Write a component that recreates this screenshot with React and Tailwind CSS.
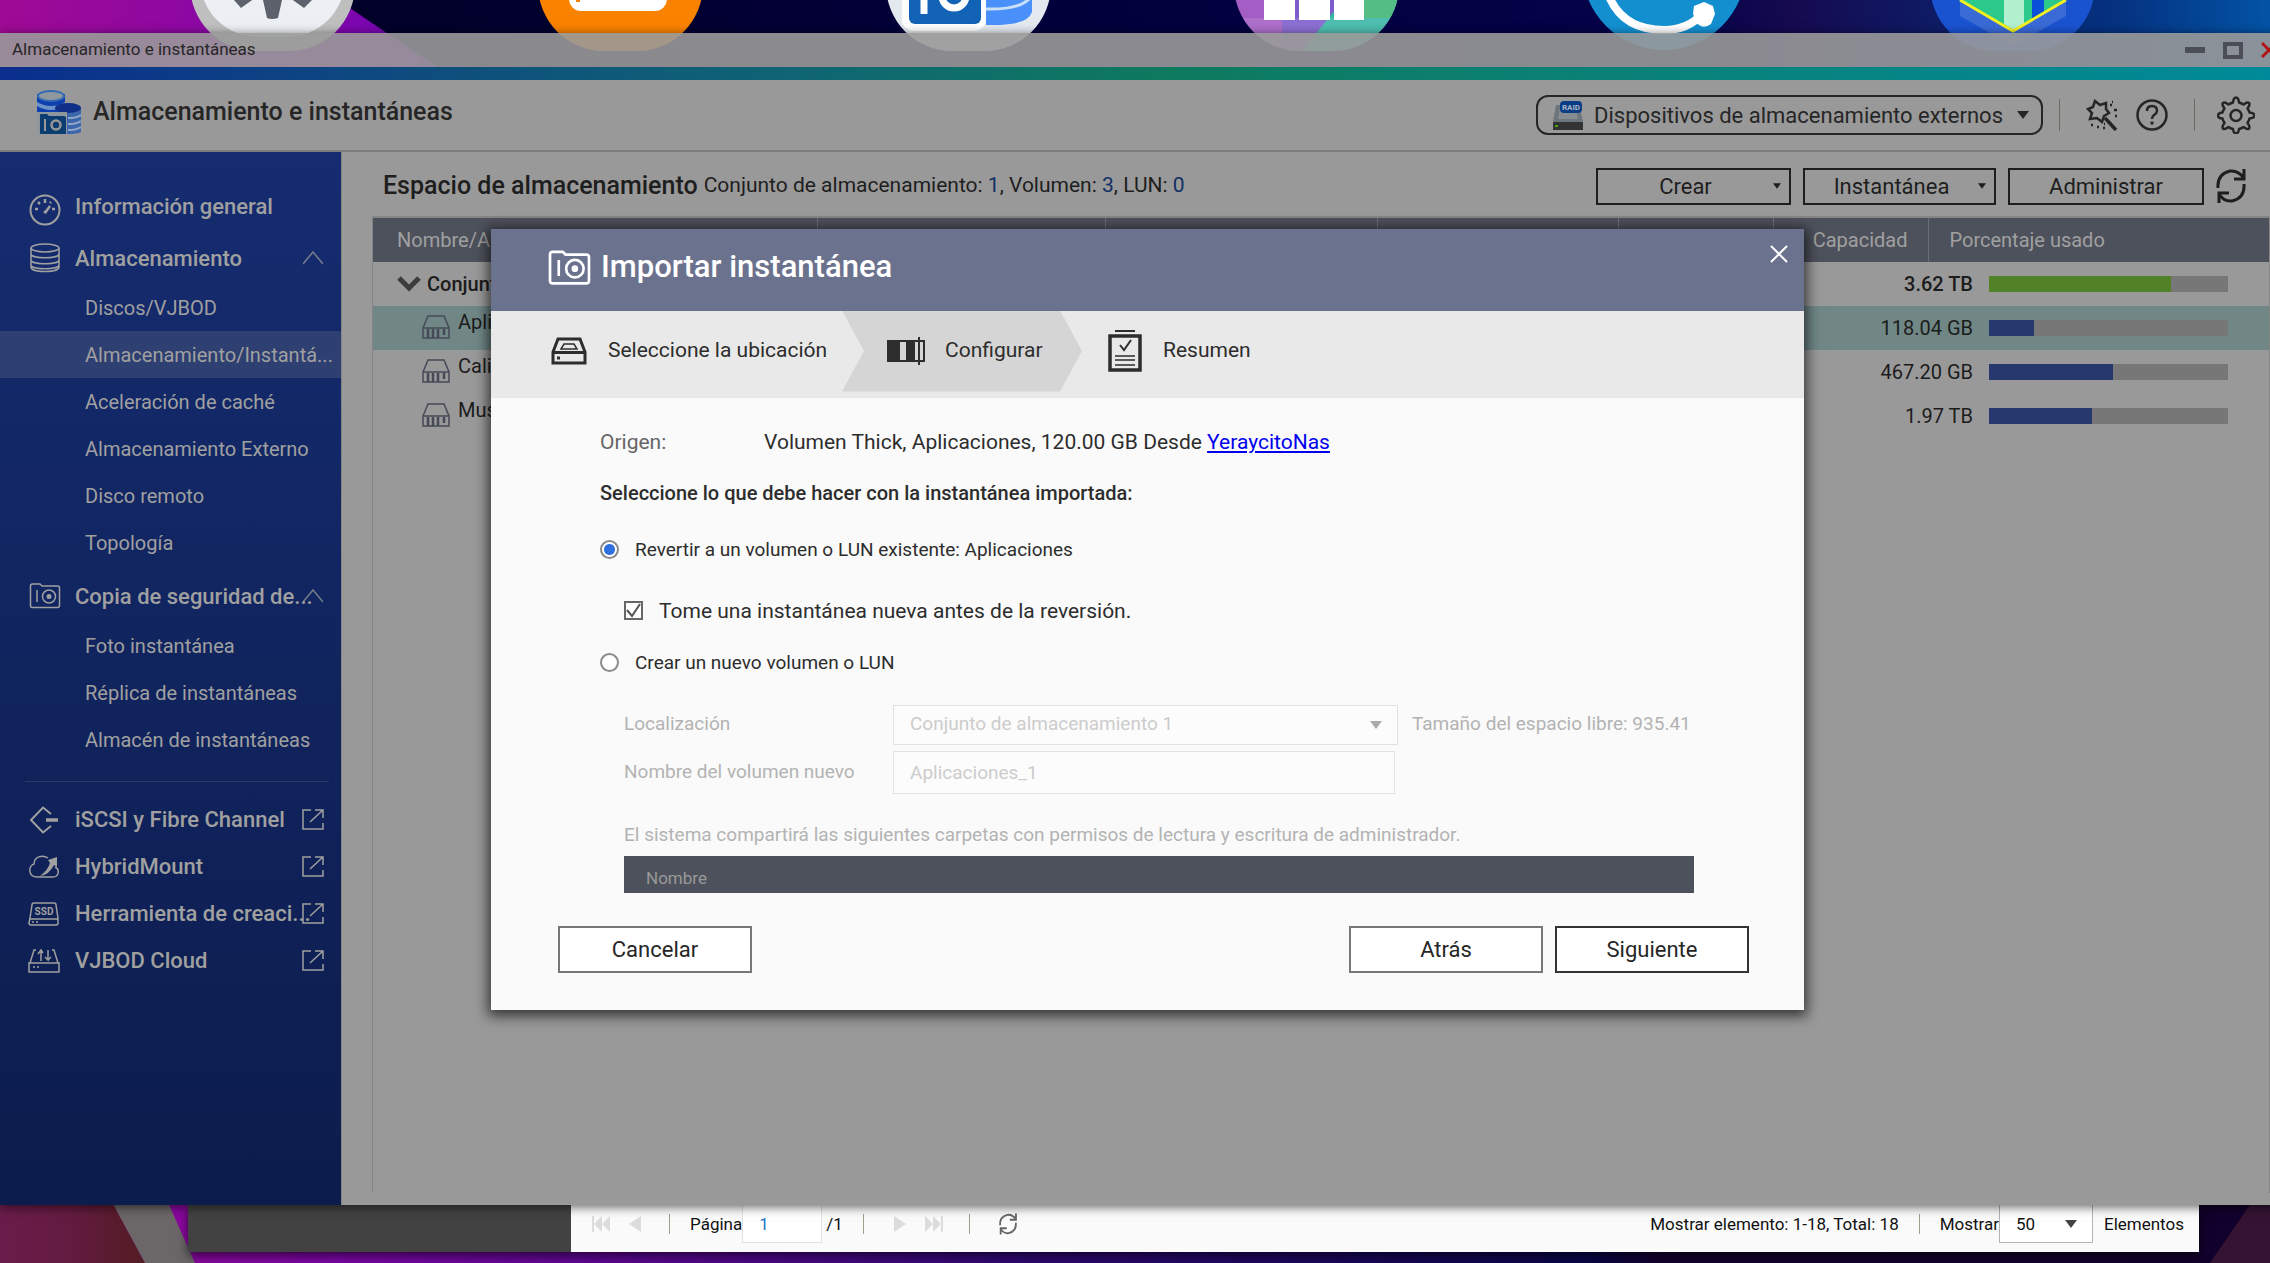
import { useState } from "react";

const desktopIcons = [
  { id: "settings", art: SettingsArt },
  { id: "files", art: FilesArt },
  { id: "storage", art: StorageArt },
  { id: "apps", art: AppsArt },
  { id: "cloud", art: CloudArt },
  { id: "shield", art: ShieldArt },
];

const storageItems = [
  "Discos/VJBOD",
  "Almacenamiento/Instantá...",
  "Aceleración de caché",
  "Almacenamiento Externo",
  "Disco remoto",
  "Topología",
];

const snapshotItems = ["Foto instantánea", "Réplica de instantáneas", "Almacén de instantáneas"];

const externalItems = [
  { label: "iSCSI y Fibre Channel", icon: IscsiIcon },
  { label: "HybridMount", icon: HybridIcon },
  { label: "Herramienta de creaci...", icon: SsdIcon },
  { label: "VJBOD Cloud", icon: VjbodIcon },
];

const volumes = [
  { name: "Aplicaciones", size: "118.04 GB", used: 19, selected: true },
  { name: "Calibre", size: "467.20 GB", used: 52 },
  { name: "Musica", size: "1.97 TB", used: 43 },
];

function SettingsArt() {
  return (
    <svg viewBox="0 0 165 165" className="h-full w-full">
      <rect width="165" height="165" rx="66" fill="#bfbfbf" />
      <rect x="10" y="10" width="145" height="141" rx="58" fill="#eceff4" />
      <path d="M44 114l7 8 14-10 8 2 4 18q5 2 11 0l4-18 8-2 14 10 8-8-6-14H50z" fill="#5c616b" />
    </svg>
  );
}

function FilesArt() {
  return (
    <svg viewBox="0 0 165 165" className="h-full w-full">
      <rect width="165" height="165" rx="66" fill="#f98200" />
      <rect x="31" y="40" width="98" height="85" rx="12" fill="#fff" />
      <path d="M40 112v4" stroke="#f98200" strokeWidth="4" />
    </svg>
  );
}

function StorageArt() {
  return (
    <svg viewBox="0 0 165 165" className="h-full w-full">
      <rect width="165" height="165" rx="66" fill="#e3e9ef" />
      <path d="M100 60h46v66q-4 12-32 13h-14z" fill="#4a90fa" />
      <path d="M100 123q38 1 46-14" fill="none" stroke="#c9dff8" strokeWidth="3" />
      <rect x="16" y="60" width="84" height="85" rx="12" fill="#fff" />
      <rect x="23" y="60" width="72" height="78" rx="6" fill="#1262b5" />
      <path d="M38 90v38" stroke="#fff" strokeWidth="7" />
      <circle cx="68" cy="110" r="12" fill="none" stroke="#fff" strokeWidth="7" />
    </svg>
  );
}

function AppsArt() {
  return (
    <svg viewBox="0 0 165 165" className="h-full w-full">
      <defs>
        <clipPath id="appsClip">
          <rect width="165" height="165" rx="66" />
        </clipPath>
      </defs>
      <g clipPath="url(#appsClip)">
        <path d="M0 0h165v165H0z" fill="#a35dc4" />
        <path d="M48 100h60v65H48z" fill="#7d5ccc" />
        <path d="M100 125l30-12h35v52H68z" fill="#35b5a4" />
        <path d="M126 80h39v52h-39z" fill="#54bd84" />
        <path d="M0 132h165v33H0z" fill="#fff" opacity=".12" />
        <path d="M30 90h31v44H30zM65 90h31v44H65zM100 90h30v44h-30z" fill="#fff" />
      </g>
    </svg>
  );
}

function CloudArt() {
  return (
    <svg viewBox="0 0 165 165" className="h-full w-full">
      <circle cx="82" cy="82" r="82" fill="#138fd0" />
      <path d="M26 108q14 36 56 36 24 0 38-16" fill="none" stroke="#fff" strokeWidth="8" />
      <path d="M112 120l10-4 9 4 2 8-4 10q-8 6-14-1l-4-9z" fill="#fff" />
    </svg>
  );
}

function ShieldArt() {
  return (
    <svg viewBox="0 0 165 165" className="h-full w-full">
      <rect width="165" height="165" rx="66" fill="#1a53cf" />
      <path d="M30 90h106v40l-53 30-53-30z" fill="#3a6ad6" />
      <path d="M30 114V60h106v54l-53 31z" fill="#2cc98a" />
      <path d="M74 60h20v78l-10 6-10-6z" fill="#b2f0cf" />
      <path d="M102 60h12v66l-12 7z" fill="#0a50d8" />
      <path d="M30 114l53 31 53-31" fill="none" stroke="#f4f01f" strokeWidth="3" />
    </svg>
  );
}

function Wallpaper() {
  return (
    <svg
      className="absolute inset-0 h-full w-full"
      viewBox="0 0 2270 1263"
      preserveAspectRatio="none"
      aria-hidden="true"
    >
      <defs>
        <linearGradient id="wallTop" x1="0" x2="1">
          <stop offset="0" stopColor="#010020" />
          <stop offset=".45" stopColor="#02003a" />
          <stop offset=".74" stopColor="#05024a" />
          <stop offset=".79" stopColor="#150a50" />
          <stop offset=".93" stopColor="#05317f" />
          <stop offset="1" stopColor="#0353a5" />
        </linearGradient>
        <linearGradient id="wallMagenta" x1="0" x2="1">
          <stop offset="0" stopColor="#9f0a95" />
          <stop offset="1" stopColor="#7405b4" />
        </linearGradient>
        <linearGradient id="wallBottom" x1="0" x2="1">
          <stop offset="0" stopColor="#9c0a96" />
          <stop offset=".15" stopColor="#7c06a8" />
          <stop offset=".45" stopColor="#300873" />
          <stop offset=".7" stopColor="#090648" />
          <stop offset=".73" stopColor="#140230" />
          <stop offset="1" stopColor="#12002c" />
        </linearGradient>
        <linearGradient id="wallMaroon" x1="0" x2="1">
          <stop offset="0" stopColor="#6a1c4a" />
          <stop offset=".5" stopColor="#631b40" />
          <stop offset="1" stopColor="#521c22" />
        </linearGradient>
      </defs>
      <rect width="2270" height="640" fill="url(#wallTop)" />
      <path d="M0 0h338l105 71H0z" fill="url(#wallMagenta)" />
      <rect y="640" width="2270" height="623" fill="url(#wallBottom)" />
      <path d="M0 1180h100l45 83H0z" fill="url(#wallMaroon)" />
      <path d="M100 1180h58l37 83h-50z" fill="#6b6668" />
      <path d="M2267 1180h3v83h-60z" fill="#341432" />
    </svg>
  );
}

function GaugeIcon() {
  return (
    <svg viewBox="0 0 32 32" className="h-8 w-8" fill="none" stroke="currentColor" strokeWidth="2">
      <circle cx="16" cy="16" r="14.5" />
      <path d="M16 19l5-7" strokeWidth="2.5" />
      <circle cx="16" cy="18" r="1.5" fill="currentColor" stroke="none" />
      <path d="M6 15h3M23 15h3M9 8l2 2M16 5v4M22 8l-1 1" strokeWidth="2.5" />
    </svg>
  );
}

function DiskStackIcon() {
  return (
    <svg viewBox="0 0 32 32" className="h-8 w-8" fill="none" stroke="currentColor" strokeWidth="1.5">
      <ellipse cx="16" cy="6" rx="14" ry="4" />
      <path d="M2 6v19c0 6 28 6 28 0V6M2 12c0 5 28 5 28 0M2 18c0 5 28 5 28 0M2 23c0 5 28 5 28 0" />
    </svg>
  );
}

function SnapshotIcon({ className, width = 1.5 }) {
  return (
    <svg viewBox="0 0 32 26" className={className} fill="none" stroke="currentColor" strokeWidth={width}>
      <path d="M1.5 3q0-2 2-2H11l2 2h15.500q2 0 2 2v17.500q0 2-2 2h-25q-2 0-2-2z" />
      <path d="M8 7v12" />
      <circle cx="20" cy="13.500" r="6.500" />
      <circle cx="20" cy="13.500" r="2.500" fill="currentColor" stroke="none" />
    </svg>
  );
}

function IscsiIcon() {
  return (
    <svg viewBox="0 0 32 28" className="h-7 w-8 shrink-0" fill="none" stroke="currentColor" strokeWidth="2">
      <path d="M23 8l-8-6.500L3 14l12 12.500 8-6.500" />
      <path d="M18 14h12" strokeWidth="3.500" />
    </svg>
  );
}

function HybridIcon() {
  return (
    <svg viewBox="0 0 32 24" className="h-6 w-8 shrink-0" fill="none" stroke="currentColor" strokeWidth="1.500">
      <path d="M20 3C14-1 6 2 6 9c-6 2-6 13 3 13h16c6 0 7-8 2-10" />
      <path d="M20 5l9-3v10l-3-2q-5 10-14 11 8-6 10-13z" fill="currentColor" stroke="none" />
    </svg>
  );
}

function SsdIcon() {
  return (
    <svg viewBox="0 0 32 24" className="h-6 w-8 shrink-0" fill="none" stroke="currentColor" strokeWidth="1.500">
      <path d="M2 16L4 3q0-2 2-2h20q2 0 2 2l2 13v5q0 2-2 2H3q-2 0-2-2zM2 17h28M4 20h2M8 20h2" />
      <text x="16" y="13" textAnchor="middle" fontSize="10" fontWeight="700" fill="currentColor" stroke="none">
        SSD
      </text>
    </svg>
  );
}

function VjbodIcon() {
  return (
    <svg viewBox="0 0 32 24" className="h-6 w-8 shrink-0" fill="none" stroke="currentColor" strokeWidth="1.500">
      <path d="M8 1H6L2 14M24 1h2l4 13M1 14h30v9H1zM5 18h2M9 18h2M13 12V1l-3 4M13 1l2 3M20 1v10l-3-3M20 11l3-3" />
    </svg>
  );
}

function ExternalIcon() {
  return (
    <svg viewBox="0 0 24 24" className="h-6 w-6 shrink-0" fill="none" stroke="currentColor" strokeWidth="1.500">
      <path d="M10 2H2v19h20v-6M14 2h8v8M9 14L22 2" />
    </svg>
  );
}

function ChevronUp() {
  return (
    <svg viewBox="0 0 20 14" className="h-3.5 w-5 shrink-0 opacity-70" fill="none" stroke="currentColor" strokeWidth="1.500">
      <path d="M0 13L10 1l10 12" />
    </svg>
  );
}

function AppLogo() {
  return (
    <svg viewBox="0 0 44 44" className="h-11 w-11">
      <path d="M0 4h28v24H0z" fill="#0f3fae" />
      <ellipse cx="14" cy="6" rx="14" ry="6" fill="#2f69b4" />
      <ellipse cx="14" cy="6" rx="12" ry="4" fill="#8f979f" />
      <path d="M0 12q14 8 28 0v4q-14 8-28 0z" fill="#6d93c8" />
      <path d="M28 18h16v24q-4 2-12 2h-4z" fill="#3c66ac" />
      <ellipse cx="31" cy="18" rx="13" ry="5" fill="#102f87" />
      <path d="M31 28q8 0 13-3M31 34q8 0 13-3M31 40q8 0 13-3" stroke="#8fa6c6" strokeWidth="2" fill="none" />
      <path d="M0 22h30v22H0z" fill="#8e969e" />
      <path d="M3 25q0-1 1-1h6l2 2h15q2 0 2 2v16H3z" fill="#0c3d70" />
      <path d="M8 29v12" stroke="#999" strokeWidth="2" />
      <circle cx="19" cy="35" r="4.500" fill="none" stroke="#999" strokeWidth="2.500" />
    </svg>
  );
}

function RaidIcon() {
  return (
    <svg viewBox="0 0 32 29" className="h-[29px] w-8">
      <path d="M4 4h23l4 17H1z" fill="#6c757b" />
      <path d="M8 7h16l2 11H6z" fill="#858d92" />
      <rect x="1" y="21" width="30" height="8" fill="#333" />
      <rect x="3" y="24" width="3" height="2" fill="#4aa010" />
      <rect x="8" y="0" width="22" height="12" rx="4" fill="#0b3d86" />
      <text x="19" y="9" textAnchor="middle" fontSize="8" fontWeight="700" fill="#aab6c6">
        RAID
      </text>
    </svg>
  );
}

function WandIcon() {
  return (
    <svg viewBox="0 0 32 32" className="h-8 w-8" fill="none" stroke="currentColor" strokeWidth="2.500">
      <path d="M9 2l5 4 6-2 0 6 3 4-5 3-2 6-5-4-7 1 2-6-4-4 5-2z" />
      <path d="M19 19l11 12" strokeWidth="3.500" />
      <path d="M24 6h2M28 11h3M26 3h1M29 17h2M5 26h2M11 28h2M17 29h2M18 25h1" />
    </svg>
  );
}

function HelpIcon() {
  return (
    <svg viewBox="0 0 32 32" className="h-8 w-8" fill="none" stroke="currentColor" strokeWidth="2.500">
      <circle cx="16" cy="16" r="14.500" />
      <path d="M11 12q0-5 5-5t5 5q0 2-3 4-2 1.500-2 4" />
      <path d="M16 22.500v3" strokeWidth="3" />
    </svg>
  );
}

function GearIcon() {
  return (
    <svg viewBox="0 0 38 38" className="h-[38px] w-[38px]" fill="none" stroke="currentColor" strokeWidth="2.500" strokeLinejoin="round">
      <path d="M19 1.500q2.500 0 3 5 3 1 4.500 2 4-3 5.500-1.500t-1.500 5.500q1.500 2 2 4 5 .5 5 3t-5 3q-.5 2-2 4.500 3 4 1.500 5.500t-5.500-1.500q-2 1.500-4.500 2-.5 4.500-3 4.500t-3-4.500q-2.500-.5-4.500-2-4 3-5.500 1.500T7.500 27q-1.500-2.500-2-4.500-4.500-.5-4.500-3t4.500-3q.5-2 2-4Q4.500 8.500 6 7t5.500 1.500q1.500-1 4.500-2 .5-5 3-5z" />
      <circle cx="19" cy="19.500" r="5.500" />
    </svg>
  );
}

function RefreshIcon({ className }) {
  return (
    <svg viewBox="0 0 30 36" className={className} fill="none" stroke="currentColor" strokeWidth="3">
      <path d="M2 20Q1 6 14 3q8-1 14 7M28 1v10h-10" />
      <path d="M28 16q1 14-12 17-8 1-13-7M3 35V25h10" />
    </svg>
  );
}

function VolumeIcon() {
  return (
    <svg viewBox="0 0 28 24" className="h-6 w-7 shrink-0 text-[#454a56]" fill="none" stroke="currentColor" strokeWidth="1.500">
      <path d="M1 13L6 1h16l5 12v10H1zM1 13h26" />
      <path d="M6 14v9M11 14v9M16 14v9M22 14v6" strokeWidth="2.500" />
    </svg>
  );
}

function DriveStepIcon() {
  return (
    <svg viewBox="0 0 36 28" className="h-7 w-9" fill="none" stroke="currentColor" strokeWidth="3">
      <path d="M2 15L7 2h22l5 13v11H2zM2 15.500h32" />
      <path d="M10 12l3-5h10l3 5z" strokeWidth="1.500" />
      <path d="M6 21h3" />
    </svg>
  );
}

function ConfigStepIcon() {
  return (
    <svg viewBox="0 0 38 28" className="h-7 w-[38px]" fill="none" stroke="currentColor">
      <path d="M0 4h13v20H0zM19 4h9v20h-9z" fill="currentColor" stroke="none" />
      <path d="M1 4h36v20H1z" strokeWidth="2" />
      <path d="M32 0v28" strokeWidth="2" />
    </svg>
  );
}

function SummaryStepIcon() {
  return (
    <svg viewBox="0 0 34 42" className="h-[42px] w-[34px]" fill="none" stroke="currentColor">
      <path d="M7 1h20" strokeWidth="2" />
      <path d="M2 6h30v34H2z" strokeWidth="3.500" />
      <path d="M12 15l4 5 7-10" strokeWidth="2" />
      <path d="M7 26h20M7 30h20M7 35h20" strokeWidth="1.500" />
    </svg>
  );
}

function CaretDown({ className = "h-2 w-3" }) {
  return (
    <svg viewBox="0 0 12 8" className={className} fill="currentColor" aria-hidden="true">
      <path d="M0 0h12L6 8z" />
    </svg>
  );
}

function TitleBar() {
  return (
    <div className="flex h-[34px] shrink-0 items-center justify-between bg-[#999999]/90 pr-[18px] pl-3">
      <span className="text-[17px] text-[#262626]">Almacenamiento e instantáneas</span>
      <div className="flex items-center gap-[18px]">
        <button type="button" aria-label="Minimizar" className="flex h-[22px] w-5 items-center">
          <span className="h-1.5 w-5 bg-[#4b4f55]" />
        </button>
        <button type="button" aria-label="Maximizar" className="h-[17px] w-5 border-4 border-[#4b4f55]" />
        <button type="button" aria-label="Cerrar" className="text-[#b01515]">
          <svg viewBox="0 0 16 16" className="h-4 w-4" stroke="currentColor" strokeWidth="3">
            <path d="M1 1l14 14M15 1L1 15" />
          </svg>
        </button>
      </div>
    </div>
  );
}

function Header() {
  return (
    <header className="flex h-[72px] shrink-0 items-center justify-between border-b-2 border-[#7d7d7d] bg-[#999999] pr-10 pl-[37px] text-[#262626]">
      <div className="flex items-center gap-3 pb-1.5">
        <AppLogo />
        <h1 className="text-[25px] font-medium">Almacenamiento e instantáneas</h1>
      </div>
      <div className="flex items-center">
        <button type="button" className="flex h-10 items-center rounded-xl border-2 border-[#262626] pr-3 pl-[14px]">
          <RaidIcon />
          <span className="ml-2.5 text-[22px]">Dispositivos de almacenamiento externos</span>
          <CaretDown className="ml-[14px] h-2 w-3" />
        </button>
        <span className="ml-4 h-8 w-px bg-[#6d6c60]" />
        <div className="ml-[26px] flex items-center gap-[18px]">
          <button type="button" aria-label="Asistente">
            <WandIcon />
          </button>
          <button type="button" aria-label="Ayuda">
            <HelpIcon />
          </button>
        </div>
        <span className="ml-[26px] h-8 w-px bg-[#6d6c60]" />
        <button type="button" aria-label="Configuración" className="ml-[22px]">
          <GearIcon />
        </button>
      </div>
    </header>
  );
}

function NavGroup({ icon, label, items, active }) {
  return (
    <>
      <button type="button" className="flex h-[52px] w-full items-center pr-[18px] pl-[29px] text-left">
        {icon}
        <span className="ml-[14px] min-w-0 flex-1 text-[22px] font-medium whitespace-nowrap">{label}</span>
        <ChevronUp />
      </button>
      <ul>
        {items.map((item) => (
          <li key={item}>
            <a
              href="#"
              className={
                item === active
                  ? "flex h-[47px] items-center bg-[#2e3f72] pl-[85px] text-xl whitespace-nowrap"
                  : "flex h-[47px] items-center pl-[85px] text-xl whitespace-nowrap"
              }
            >
              {item}
            </a>
          </li>
        ))}
      </ul>
    </>
  );
}

function Sidebar() {
  return (
    <nav className="w-[341px] shrink-0 bg-gradient-to-b from-[#152c70] to-[#0c1c4c] pt-7 text-[#a0a0a0]">
      <a href="#" className="flex h-[52px] items-center pl-[29px]">
        <span className="pt-2">
          <GaugeIcon />
        </span>
        <span className="ml-[14px] text-[22px] font-medium">Información general</span>
      </a>
      <NavGroup
        icon={<DiskStackIcon />}
        label="Almacenamiento"
        items={storageItems}
        active="Almacenamiento/Instantá..."
      />
      <div className="pt-1">
        <NavGroup
          icon={<SnapshotIcon className="h-[26px] w-8 shrink-0" />}
          label="Copia de seguridad de..."
          items={snapshotItems}
        />
      </div>
      <hr className="mt-[18px] mr-3 mb-[14px] ml-[25px] border-[#2b3963]" />
      <ul>
        {externalItems.map(({ label, icon: Icon }) => (
          <li key={label}>
            <a href="#" className="flex h-[47px] items-center pr-4 pl-[28px]">
              <Icon />
              <span className="ml-[15px] min-w-0 flex-1 text-[22px] font-medium whitespace-nowrap">{label}</span>
              <ExternalIcon />
            </a>
          </li>
        ))}
      </ul>
    </nav>
  );
}

function UsageBar({ value, color }) {
  return (
    <div className="h-4 bg-[#777777]">
      <div className={`h-4 ${color}`} style={{ width: `${value}%` }} />
    </div>
  );
}

function StorageTable() {
  return (
    <div className="flex-1 border-t-2 border-r border-l border-[#858585]">
      <table className="w-full table-fixed">
        <thead>
          <tr className="h-11 bg-[#4d515b] text-left text-xl text-[#a0a0a0]">
            <th className="border-r border-[#6a6e77] pl-6 font-normal">Nombre/Alias</th>
            <th className="w-[288px] border-r border-[#6a6e77]" />
            <th className="w-[272px] border-r border-[#6a6e77]" />
            <th className="w-[241px] border-r border-[#6a6e77]" />
            <th className="w-[155px] border-r border-[#6a6e77]" />
            <th className="w-[155px] border-r border-[#6a6e77] pr-5 text-right font-normal">Capacidad</th>
            <th className="w-[341px] pl-[21px] font-normal">Porcentaje usado</th>
          </tr>
        </thead>
      </table>
      <table className="w-full table-fixed text-xl text-[#1c1c1c]">
        <tbody>
          <tr className="h-11 font-medium">
            <td>
              <span className="flex items-center gap-1.5 pl-6">
                <svg viewBox="0 0 24 16" className="h-4 w-6" fill="none" stroke="#3c3c3c" strokeWidth="5">
                  <path d="M2 2l10 10L22 2" />
                </svg>
                Conjunto 1
              </span>
            </td>
            <td className="w-[200px] pr-4 text-right">3.62 TB</td>
            <td className="w-[280px] pr-[41px]">
              <UsageBar value={76} color="bg-[#518227]" />
            </td>
          </tr>
          {volumes.map((v) => (
            <tr key={v.name} className={v.selected ? "h-11 bg-[#708786]" : "h-11"}>
              <td>
                <span className="flex h-8 items-center gap-2 pb-3 pl-[49px]">
                  <span className="pt-2.5">
                    <VolumeIcon />
                  </span>
                  {v.name}
                </span>
              </td>
              <td className="pr-4 text-right">{v.size}</td>
              <td className="pr-[41px]">
                <UsageBar value={v.used} color="bg-[#27386f]" />
              </td>
            </tr>
          ))}
        </tbody>
      </table>
    </div>
  );
}

function Content() {
  return (
    <main className="flex min-w-0 flex-1 flex-col border-l border-[#858585] bg-[#999999] pr-[25px] pb-3 pl-[30px] text-[#1e1e1e]">
      <div className="flex h-16 shrink-0 items-center justify-between pr-6 pl-[11px]">
        <div className="flex items-center gap-1.5 pt-1">
          <h2 className="text-[25px] font-medium">Espacio de almacenamiento</h2>
          <p className="text-[21px]">
            Conjunto de almacenamiento: <span className="text-[#112f63]">1</span>, Volumen:{" "}
            <span className="text-[#112f63]">3</span>, LUN: <span className="text-[#112f63]">0</span>
          </p>
        </div>
        <div className="flex items-center gap-3 pt-1 text-[22px]">
          <button type="button" className="flex h-[37px] w-[195px] items-center border-2 border-[#1e1e1e] pr-2">
            <span className="flex-1">Crear</span>
            <CaretDown className="h-1.5 w-2" />
          </button>
          <button type="button" className="flex h-[37px] w-[193px] items-center border-2 border-[#1e1e1e] pr-2">
            <span className="flex-1">Instantánea</span>
            <CaretDown className="h-1.5 w-2" />
          </button>
          <button type="button" className="flex h-[37px] w-[196px] items-center justify-center border-2 border-[#1e1e1e]">
            Administrar
          </button>
          <button type="button" aria-label="Actualizar">
            <RefreshIcon className="h-9 w-[30px]" />
          </button>
        </div>
      </div>
      <StorageTable />
    </main>
  );
}

function Steps() {
  return (
    <ol className="flex h-[87px] items-start bg-[#e9e9e9] pb-1.5 pl-[60px] text-[21px] text-[#2d2d2d]">
      <li className="flex h-[81px] w-[291px] items-center gap-[21px] whitespace-nowrap">
        <DriveStepIcon />
        Seleccione la ubicación
      </li>
      <li
        aria-current="step"
        className="flex h-[81px] w-[240px] items-center gap-5 bg-[#d5d5d5] pl-[45px] [clip-path:polygon(0_0,218px_0,100%_50%,218px_100%,0_100%,22px_50%)]"
      >
        <ConfigStepIcon />
        Configurar
      </li>
      <li className="flex h-[81px] items-center gap-[21px] pl-[26px]">
        <SummaryStepIcon />
        Resumen
      </li>
    </ol>
  );
}

function ImportDialog() {
  const [mode, setMode] = useState("revert");
  const [snapshotFirst, setSnapshotFirst] = useState(true);

  return (
    <div
      role="dialog"
      aria-labelledby="dialog-title"
      className="flex w-[1313px] flex-col bg-[#fafafa] text-[19px] text-[#2d2d2d] shadow-[0_3px_12px_3px_rgba(0,0,0,0.65)]"
    >
      <div className="flex h-[82px] items-center justify-between bg-[#6b728e] pr-4 pl-[57px] text-white">
        <div className="flex items-center gap-2.5 pb-1">
          <SnapshotIcon className="h-9 w-[43px]" width={2} />
          <h2 id="dialog-title" className="text-[31px] font-medium">
            Importar instantánea
          </h2>
        </div>
        <button type="button" aria-label="Cerrar" className="pb-8">
          <svg viewBox="0 0 18 18" className="h-[18px] w-[18px]" stroke="currentColor" strokeWidth="2">
            <path d="M1 1l16 16M17 1L1 17" />
          </svg>
        </button>
      </div>
      <Steps />

      <form className="flex flex-col" onSubmit={(e) => e.preventDefault()}>
        <div className="flex flex-col pr-[109px] pl-[109px]">
          <div className="mt-[30px] flex text-[21px] leading-7">
            <span className="w-[164px] text-[#666666]">Origen:</span>
            <span>
              Volumen Thick, Aplicaciones, 120.00 GB Desde{" "}
              <a href="#" className="text-[#0000ee] underline">
                YeraycitoNas
              </a>
            </span>
          </div>
          <p className="mt-[23px] text-xl leading-7 font-medium">
            Seleccione lo que debe hacer con la instantánea importada:
          </p>
          <label className="mt-[29px] flex items-center gap-4 leading-7">
            <input
              type="radio"
              name="mode"
              checked={mode === "revert"}
              onChange={() => setMode("revert")}
              className="h-[19px] w-[19px] appearance-none rounded-full border-2 border-[#8a8a8a] bg-white checked:bg-[radial-gradient(circle,#2f6fe0_5px,#ffffff_6px)]"
            />
            Revertir a un volumen o LUN existente: Aplicaciones
          </label>
          <label className="mt-[33px] ml-6 flex items-center gap-4 text-[21px] leading-7">
            <span className="grid">
              <input
                type="checkbox"
                checked={snapshotFirst}
                onChange={(e) => setSnapshotFirst(e.target.checked)}
                className="peer col-start-1 row-start-1 h-[19px] w-[19px] appearance-none border-2 border-[#666666] bg-white"
              />
              <svg
                viewBox="0 0 19 19"
                className="pointer-events-none invisible col-start-1 row-start-1 h-[19px] w-[19px] peer-checked:visible"
                fill="none"
                stroke="#555"
                strokeWidth="2"
              >
                <path d="M3 9l5 6 8-12" />
              </svg>
            </span>
            Tome una instantánea nueva antes de la reversión.
          </label>
          <label className="mt-6 flex items-center gap-4 leading-7">
            <input
              type="radio"
              name="mode"
              checked={mode === "create"}
              onChange={() => setMode("create")}
              className="h-[19px] w-[19px] appearance-none rounded-full border-2 border-[#8a8a8a] bg-white checked:bg-[radial-gradient(circle,#2f6fe0_5px,#ffffff_6px)]"
            />
            Crear un nuevo volumen o LUN
          </label>

          <div className="mt-7 ml-6 flex h-10 items-center text-[#b3b3b3]">
            <label htmlFor="location" className="w-[269px]">
              Localización
            </label>
            <div className="grid w-[505px] items-center">
              <select
                id="location"
                disabled
                className="col-start-1 row-start-1 h-10 w-full appearance-none border border-[#e2e2e2] bg-[#fcfcfc] px-4 text-[#cccccc] opacity-100"
              >
                <option>Conjunto de almacenamiento 1</option>
              </select>
              <CaretDown className="pointer-events-none col-start-1 row-start-1 mr-4 h-2 w-3 justify-self-end text-[#ababab]" />
            </div>
            <span className="ml-[14px] whitespace-nowrap">Tamaño del espacio libre: 935.41</span>
          </div>
          <div className="mt-1.5 ml-6 flex items-center text-[#b3b3b3]">
            <label htmlFor="volume-name" className="w-[269px]">
              Nombre del volumen nuevo
            </label>
            <input
              id="volume-name"
              type="text"
              disabled
              defaultValue="Aplicaciones_1"
              className="h-[43px] w-[502px] border border-[#e2e2e2] bg-[#fcfcfc] px-4 text-[#cccccc]"
            />
          </div>

          <p className="mt-[27px] ml-6 leading-7 text-[#b3b3b3]">
            El sistema compartirá las siguientes carpetas con permisos de lectura y escritura de administrador.
          </p>
          <table className="mt-[7px] ml-6 w-[1070px]">
            <thead>
              <tr className="h-[37px] bg-[#4d515b] text-left text-[#999999]">
                <th className="pt-2 pl-[22px] text-[17px] leading-6 font-normal">Nombre</th>
              </tr>
            </thead>
          </table>
        </div>

        <div className="flex items-center justify-between pt-[33px] pr-[55px] pb-[37px] pl-[67px] text-[22px] text-[#262626]">
          <button type="button" className="h-[47px] w-[194px] border-2 border-[#777777] bg-white">
            Cancelar
          </button>
          <div className="flex gap-3">
            <button type="button" className="h-[47px] w-[194px] border-2 border-[#777777] bg-white">
              Atrás
            </button>
            <button type="submit" className="h-[47px] w-[194px] border-2 border-[#333333] bg-white">
              Siguiente
            </button>
          </div>
        </div>
      </form>
    </div>
  );
}

function Divider() {
  return <span className="h-5 w-px bg-[#a39d8b]" />;
}

// Paging toolbar of the window that sits behind the storage manager
function BackWindow() {
  return (
    <div className="relative mr-[71px] ml-[188px] flex h-[47px] shrink-0 bg-[#424242] shadow-[0_4px_10px_rgba(0,0,0,0.6)]">
      <div className="ml-[383px] flex flex-1 items-start justify-between bg-[#fafafa] pr-[15px] pl-[21px] text-[17px] leading-[38px] text-[#111111]">
        <div className="flex items-center">
          <button type="button" aria-label="Primera página" className="text-[#dcdcdc]">
            <svg viewBox="0 0 18 16" className="h-4 w-[18px]" fill="currentColor">
              <path d="M0 0h2v16H0zM10 0v16L2 8zM18 0v16l-8-8z" />
            </svg>
          </button>
          <button type="button" aria-label="Página anterior" className="ml-[19px] text-[#dcdcdc]">
            <svg viewBox="0 0 12 16" className="h-4 w-3" fill="currentColor">
              <path d="M12 0v16L0 8z" />
            </svg>
          </button>
          <span className="ml-7 flex">
            <Divider />
          </span>
          <label htmlFor="page" className="ml-5">
            Página
          </label>
          <input
            id="page"
            type="text"
            defaultValue="1"
            className="h-[38px] w-20 border border-t-0 border-[#e2e2e2] bg-white px-4 text-[#1a7ac8]"
          />
          <span className="ml-1">/1</span>
          <span className="ml-5 flex">
            <Divider />
          </span>
          <button type="button" aria-label="Página siguiente" className="ml-[30px] text-[#dcdcdc]">
            <svg viewBox="0 0 12 16" className="h-4 w-3" fill="currentColor">
              <path d="M0 0v16l12-8z" />
            </svg>
          </button>
          <button type="button" aria-label="Última página" className="ml-[19px] text-[#dcdcdc]">
            <svg viewBox="0 0 18 16" className="h-4 w-[18px]" fill="currentColor">
              <path d="M16 0h2v16h-2zM0 0v16l8-8zM8 0v16l8-8z" />
            </svg>
          </button>
          <span className="ml-[26px] flex">
            <Divider />
          </span>
          <button type="button" aria-label="Recargar" className="ml-7 text-[#666666]">
            <RefreshIcon className="h-[22px] w-5" />
          </button>
        </div>
        <div className="flex items-center">
          <span>Mostrar elemento: 1-18, Total: 18</span>
          <span className="mx-5 flex">
            <Divider />
          </span>
          <label htmlFor="page-size">Mostrar</label>
          <div className="grid w-[94px] items-center">
            <select
              id="page-size"
              className="col-start-1 row-start-1 h-[38px] w-full appearance-none border border-t-0 border-[#b5b5b5] bg-white px-4"
            >
              <option>50</option>
            </select>
            <CaretDown className="pointer-events-none col-start-1 row-start-1 mr-4 h-2 w-3 justify-self-end text-[#444444]" />
          </div>
          <span className="ml-[11px]">Elementos</span>
        </div>
      </div>
    </div>
  );
}

export default function App() {
  return (
    <div className="relative flex min-h-screen flex-col overflow-hidden font-[Roboto,sans-serif]">
      <Wallpaper />
      <div className="absolute inset-x-0 -top-[114px] flex gap-[183px] pl-[190px]">
        {desktopIcons.map(({ id, art: Art }) => (
          <div key={id} className="h-[165px] w-[165px] shrink-0">
            <Art />
          </div>
        ))}
      </div>

      <section className="relative z-10 mt-[33px] flex w-[calc(100%+25px)] flex-1 flex-col shadow-[0_2px_10px_rgba(0,0,0,0.6)]">
        <TitleBar />
        <div className="h-[13px] shrink-0 bg-[linear-gradient(to_right,#0a2e8e,#0e4c7e_18%,#0f6474_34%,#0e7a5e_51%,#0b8073_67%,#008a9a)]" />
        <Header />
        <div className="flex flex-1">
          <Sidebar />
          <Content />
        </div>
        <div className="absolute inset-0 flex items-center justify-center">
          <ImportDialog />
        </div>
      </section>

      <BackWindow />
      <div className="h-[11px] shrink-0" />
    </div>
  );
}
